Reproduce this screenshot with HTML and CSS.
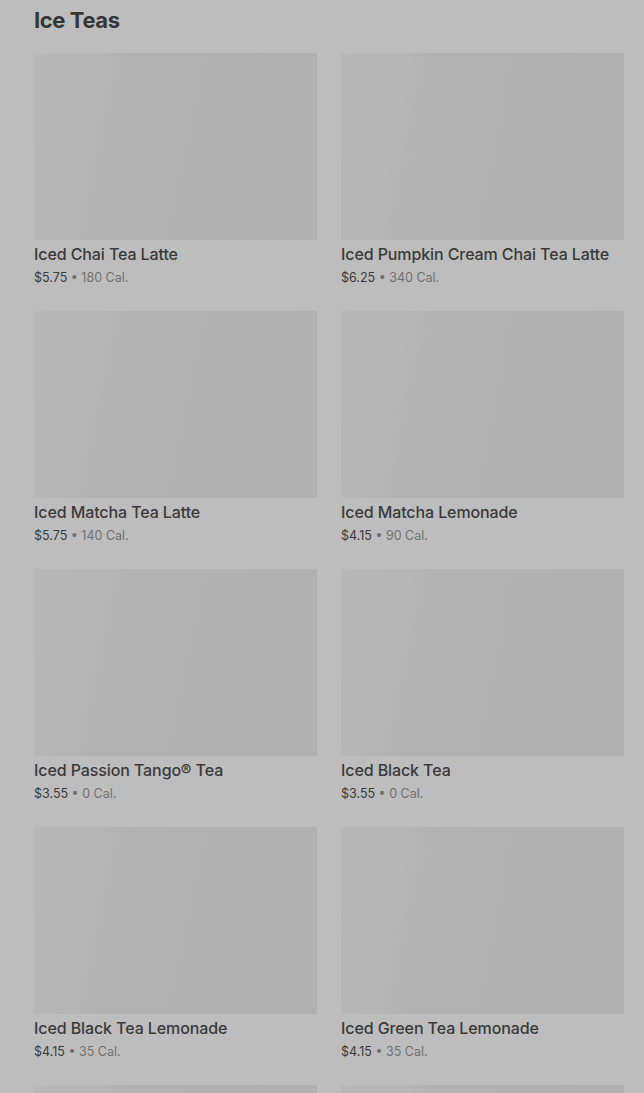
FILE: index.html
```html
<!DOCTYPE html>
<html lang="en">
<head>
  <meta charset="UTF-8" />
  <meta name="viewport" content="width=device-width, initial-scale=1.0"/>
  <title>Ice Teas</title>
  <link rel="stylesheet" href="styles.css">
</head>
<body>
  <section class="menu-section">
    <h2 class="section-title">Ice Teas</h2>

    <div class="grid">
      <div class="item">
        <div class="thumb"></div>
        <div class="name">Iced Chai Tea Latte</div>
        <div class="meta"><span class="price">$5.75</span> • 180 Cal.</div>
      </div>
      <div class="item">
        <div class="thumb"></div>
        <div class="name">Iced Pumpkin Cream Chai Tea Latte</div>
        <div class="meta"><span class="price">$6.25</span> • 340 Cal.</div>
      </div>
      <div class="item">
        <div class="thumb"></div>
        <div class="name">Iced Matcha Tea Latte</div>
        <div class="meta"><span class="price">$5.75</span> • 140 Cal.</div>
      </div>
      <div class="item">
        <div class="thumb"></div>
        <div class="name">Iced Matcha Lemonade</div>
        <div class="meta"><span class="price">$4.15</span> • 90 Cal.</div>
      </div>
      <div class="item">
        <div class="thumb"></div>
        <div class="name">Iced Passion Tango® Tea</div>
        <div class="meta"><span class="price">$3.55</span> • 0 Cal.</div>
      </div>
      <div class="item">
        <div class="thumb"></div>
        <div class="name">Iced Black Tea</div>
        <div class="meta"><span class="price">$3.55</span> • 0 Cal.</div>
      </div>
      <div class="item">
        <div class="thumb"></div>
        <div class="name">Iced Black Tea Lemonade</div>
        <div class="meta"><span class="price">$4.15</span> • 35 Cal.</div>
      </div>
      <div class="item">
        <div class="thumb"></div>
        <div class="name">Iced Green Tea Lemonade</div>
        <div class="meta"><span class="price">$4.15</span> • 35 Cal.</div>
      </div>
      <div class="item">
        <div class="thumb"></div>
      </div>
      <div class="item">
        <div class="thumb"></div>
      </div>
    </div>
  </section>
</body>
</html>
```

FILE: styles.css
```css
body {
  margin: 0;
  background: #bdbdbd;
  font-family: Inter, "Open Sans", sans-serif;
  color: #383838;
  overflow: hidden;
}

.menu-section {
  padding: 6px 20px 0 34px;
}

.section-title {
  margin: 0 0 18px;
  font-size: 22px;
  line-height: 29px;
  font-weight: 700;
  letter-spacing: -0.4px;
  color: #363636;
}

.grid {
  display: grid;
  grid-template-columns: 283px 283px;
  column-gap: 24px;
  row-gap: 24px;
}

.item {
  height: 234px;
}

.thumb {
  height: 187px;
  border-radius: 1px;
  background: linear-gradient(102deg, #b8b8b8 0%, #b7b7b7 16%, #b2b2b2 32%, #b1b1b1 100%);
}

.name {
  margin-top: 4px;
  font-size: 16px;
  line-height: 20px;
  font-weight: 500;
  letter-spacing: -0.1px;
  color: #3a3a3a;
  white-space: nowrap;
}

.meta {
  margin-top: 5px;
  font-size: 12.5px;
  line-height: 18px;
  color: #717171;
}

.price {
  color: #3a3a3a;
}
```
